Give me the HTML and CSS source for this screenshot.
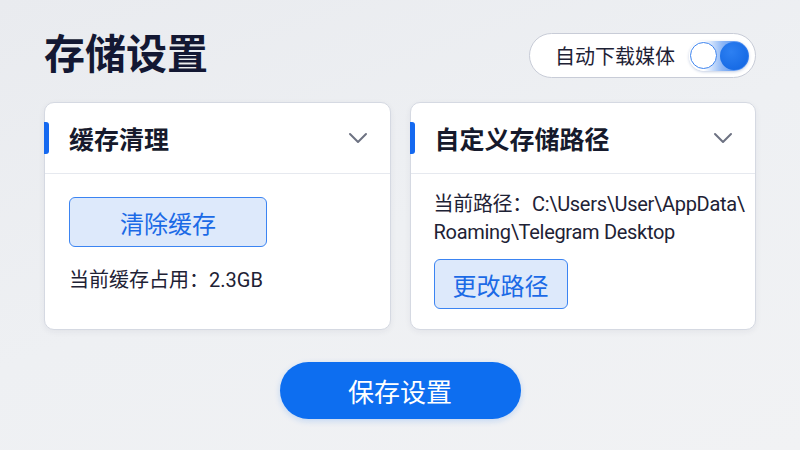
FILE: index.html
```html
<!DOCTYPE html>
<html lang="zh-CN">

<head>
    <meta charset="UTF-8" />
    <meta name="viewport" content="width=device-width, initial-scale=1.0" />
    <title>存储设置</title>
    <link rel="stylesheet" href="styles.css">
</head>

<body>
    <div class="page">
        <header class="topBar">
            <h1 class="title">存储设置</h1>
            <label class="autoPill">
                <span class="autoLabel">自动下载媒体</span>
                <span class="switch">
                    <span class="knob"></span>
                    <span class="dot"></span>
                </span>
            </label>
        </header>

        <div class="cards">
            <section class="card">
                <div class="cardHead">
                    <h2 class="cardTitle">缓存清理</h2>
                    <svg class="chevron" width="20" height="12" viewBox="0 0 20 12">
                        <path d="M2 2 L10 10 L18 2" fill="none" stroke="#6d7282" stroke-width="2" stroke-linecap="round" stroke-linejoin="round" />
                    </svg>
                </div>
                <div class="cardBody cacheBody">
                    <button class="softBtn wideBtn">清除缓存</button>
                    <p class="info">当前缓存占用：2.3GB</p>
                </div>
            </section>

            <section class="card">
                <div class="cardHead">
                    <h2 class="cardTitle">自定义存储路径</h2>
                    <svg class="chevron" width="20" height="12" viewBox="0 0 20 12">
                        <path d="M2 2 L10 10 L18 2" fill="none" stroke="#6d7282" stroke-width="2" stroke-linecap="round" stroke-linejoin="round" />
                    </svg>
                </div>
                <div class="cardBody pathBody">
                    <p class="info path">当前路径：C:\Users\User\AppData\<br>Roaming\Telegram Desktop</p>
                    <button class="softBtn">更改路径</button>
                </div>
            </section>
        </div>

        <div class="footer">
            <button class="saveBtn">保存设置</button>
        </div>
    </div>
</body>

</html>
```

FILE: styles.css
```css
:root {
    --ink: #131833;
    --text: #1e2235;
    --blue: #0d6ef0;
    --blue-soft: #dde9fb;
    --line: #d5d9e2;
    --base-font: "Roboto", "Noto Sans CJK SC", sans-serif;
}

html,
body {
    margin: 0;
    padding: 0;
    height: 100%;
    font-family: var(--base-font);
    color: var(--text);
}

body {
    background: linear-gradient(160deg, #e9ebef 0%, #eef0f3 50%, #f1f2f4 100%);
}

.page {
    padding: 0 44px;
}

.topBar {
    display: flex;
    justify-content: space-between;
    align-items: center;
    height: 102px;
    padding-top: 9px;
    box-sizing: border-box;
}

.title {
    margin: 0;
    font-size: 41px;
    font-weight: 700;
    color: var(--ink);
    line-height: 1;
}

.autoPill {
    display: flex;
    align-items: center;
    gap: 14px;
    height: 45px;
    box-sizing: border-box;
    padding: 0 6px 0 25px;
    background: #fff;
    border: 1px solid #c8ccd7;
    border-radius: 23px;
}

.autoLabel {
    font-size: 20px;
    color: var(--text);
}

.switch {
    display: flex;
    align-items: center;
    justify-content: space-between;
    width: 60px;
    height: 30px;
    box-sizing: border-box;
    padding: 1px;
    border-radius: 15px;
    background: linear-gradient(90deg, #ffffff 25%, #8fb8f6 55%, #2a78ee 100%);
    box-shadow: 0 1px 3px rgba(20, 60, 140, 0.25);
}

.knob {
    width: 27px;
    height: 27px;
    box-sizing: border-box;
    border-radius: 50%;
    background: #fff;
    border: 1.5px solid #3d84ef;
}

.dot {
    width: 28px;
    height: 28px;
    border-radius: 50%;
    background: radial-gradient(circle at 40% 35%, #2d80f2, #0f63e0);
}

.cards {
    display: grid;
    grid-template-columns: 1fr 1fr;
    gap: 19px;
}

.card {
    position: relative;
    height: 228px;
    box-sizing: border-box;
    background: #fff;
    border: 1px solid var(--line);
    border-radius: 10px;
    box-shadow: 0 2px 6px rgba(30, 40, 70, 0.06);
}

.cardHead {
    display: flex;
    justify-content: space-between;
    align-items: center;
    height: 70px;
    padding: 0 22px 0 24px;
    border-bottom: 1px solid #e6e9ef;
}

.cardHead::before {
    content: "";
    position: absolute;
    left: -1px;
    top: 19px;
    width: 5px;
    height: 32px;
    background: #1569f0;
    border-radius: 0 3px 3px 0;
}

.cardTitle {
    margin: 0;
    font-size: 25px;
    font-weight: 700;
    color: #161a2c;
}

.cardBody {
    display: flex;
    flex-direction: column;
    align-items: flex-start;
    padding: 0 24px;
}

.cacheBody {
    padding-top: 23px;
    gap: 19px;
}

.pathBody {
    padding-top: 16px;
    gap: 13px;
    padding-left: 23px;
    padding-right: 0;
}

.info {
    margin: 0;
    font-size: 20px;
    line-height: 28px;
    color: var(--text);
}

.path {
    letter-spacing: -0.3px;
}

.softBtn {
    height: 50px;
    padding: 0 18px;
    font-family: var(--base-font);
    font-size: 24px;
    color: #1b6ae6;
    background: var(--blue-soft);
    border: 1.5px solid #3b84f2;
    border-radius: 6px;
}

.wideBtn {
    width: 198px;
}

.footer {
    display: flex;
    justify-content: center;
    padding-top: 32px;
}

.saveBtn {
    width: 241px;
    height: 57px;
    font-family: var(--base-font);
    font-size: 26px;
    color: #fff;
    background: var(--blue);
    border: none;
    border-radius: 29px;
    box-shadow: 0 2px 6px rgba(13, 110, 240, 0.2);
}
```
